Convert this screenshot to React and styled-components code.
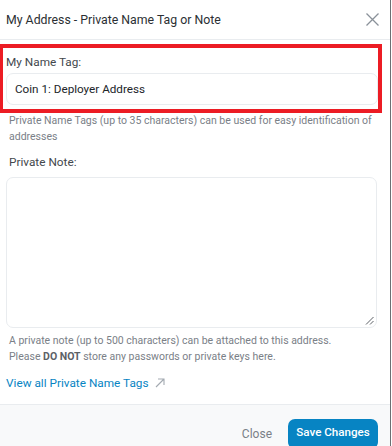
import React from "react";
import styled, { createGlobalStyle } from "styled-components";

const Global = createGlobalStyle`
  html, body { margin: 0; padding: 0; background: #ffffff; }
  body { font-family: Roboto, "Noto Sans", "Liberation Sans", sans-serif; color: #212529; }
  * { box-sizing: border-box; }
`;

const Modal = styled.div`
  width: 391px;
  height: 446px;
  border-right: 1px solid #6b6f73;
  display: flex;
  flex-direction: column;
  overflow: hidden;
  background: #fff;
`;

const Header = styled.div`
  height: 40px;
  flex: none;
  display: flex;
  align-items: center;
  justify-content: space-between;
  padding: 0 11px 0 6px;
  border-bottom: 1px solid #e9ecef;
`;

const Title = styled.div`
  font-size: 12.3px;
  color: #2b2f33;
`;

const CloseIcon = styled.button`
  border: 0;
  background: none;
  padding: 0;
  width: 13px;
  height: 13px;
  display: flex;
  cursor: pointer;
`;

const Body = styled.div`
  flex: 1;
  padding: 4px 13px 0 0;
  display: flex;
  flex-direction: column;
`;

const HighlightGroup = styled.div`
  border: 4px solid #ec1c24;
  border-left-width: 3px;
  margin-right: -5px;
  padding: 5px 0 4px 3px;
  display: flex;
  flex-direction: column;
`;

const Label = styled.div`
  font-size: 11.8px;
  line-height: 18px;
  color: #43484d;
  padding-left: ${(p) => p.$indent || 0}px;
  margin-top: ${(p) => p.$top || 0}px;
`;

const TextInput = styled.div`
  height: 32px;
  border: 1px solid #e9ecef;
  border-radius: 7px;
  display: flex;
  align-items: center;
  padding: 0 8px;
  font-size: 11.7px;
  color: #212529;
  margin-top: 2px;
`;

const Section = styled.div`
  padding-left: 6px;
  display: flex;
  flex-direction: column;
`;

const Help = styled.div`
  font-size: 10.5px;
  line-height: 15.5px;
  color: #7a8087;
  padding-left: 3px;
  margin-top: ${(p) => p.$top || 0}px;
  b { color: #5c6166; font-weight: 700; }
`;

const TextArea = styled.div`
  position: relative;
  height: 151px;
  border: 1px solid #e9ecef;
  border-radius: 7px;
  margin-top: 6px;
`;

const Grip = styled.svg`
  position: absolute;
  right: 2px;
  bottom: 2px;
`;

const Link = styled.a`
  display: inline-flex;
  align-items: center;
  gap: 6px;
  margin-top: 11px;
  font-size: 11.8px;
  line-height: 16px;
  color: #0784c3;
  text-decoration: none;
`;

const Footer = styled.div`
  height: 42px;
  flex: none;
  border-top: 1px solid #e9ecef;
  background: #f8f9fa;
  display: flex;
  justify-content: flex-end;
  align-items: flex-start;
  gap: 16px;
  padding: 14px 12px 0 0;
`;

const GhostButton = styled.button`
  border: 0;
  background: none;
  font-family: inherit;
  font-size: 12px;
  color: #7a8087;
  padding: 0;
  height: 30px;
  line-height: 26px;
`;

const PrimaryButton = styled.button`
  border: 0;
  background: #0784c3;
  color: #fff;
  font-family: inherit;
  font-size: 11.6px;
  font-weight: 500;
  border-radius: 7px;
  width: 90px;
  height: 30px;
  padding: 0 0 4px;
`;

export default function App() {
  return (
    <>
      <Global />
      <Modal>
        <Header>
          <Title>My Address - Private Name Tag or Note</Title>
          <CloseIcon aria-label="Close">
            <svg width="13" height="13" viewBox="0 0 13 13">
              <path d="M0.5 0.5 L12.5 12.5 M12.5 0.5 L0.5 12.5" stroke="#8a9199" strokeWidth="1.3" fill="none" />
            </svg>
          </CloseIcon>
        </Header>
        <Body>
          <HighlightGroup>
            <Label>My Name Tag:</Label>
            <TextInput>Coin 1: Deployer Address</TextInput>
          </HighlightGroup>
          <Section>
            <Help>
              Private Name Tags (up to 35 characters) can be used for easy identification of addresses
            </Help>
            <Label $indent={3} $top={9}>Private Note:</Label>
            <TextArea>
              <Grip width="9" height="9" viewBox="0 0 9 9">
                <path d="M8.5 1 L1 8.5 M8.5 5 L5 8.5" stroke="#5c6166" strokeWidth="1" />
              </Grip>
            </TextArea>
            <Help $top={5}>
              A private note (up to 500 characters) can be attached to this address.
              <br />
              Please <b>DO NOT</b> store any passwords or private keys here.
            </Help>
            <Link href="#">
              View all Private Name Tags
              <svg width="10" height="10" viewBox="0 0 10 10">
                <path d="M1 9 L9 1 M3 1 H9 V7" stroke="#a3aab1" strokeWidth="1.1" fill="none" />
              </svg>
            </Link>
          </Section>
        </Body>
        <Footer>
          <GhostButton>Close</GhostButton>
          <PrimaryButton>Save Changes</PrimaryButton>
        </Footer>
      </Modal>
    </>
  );
}
